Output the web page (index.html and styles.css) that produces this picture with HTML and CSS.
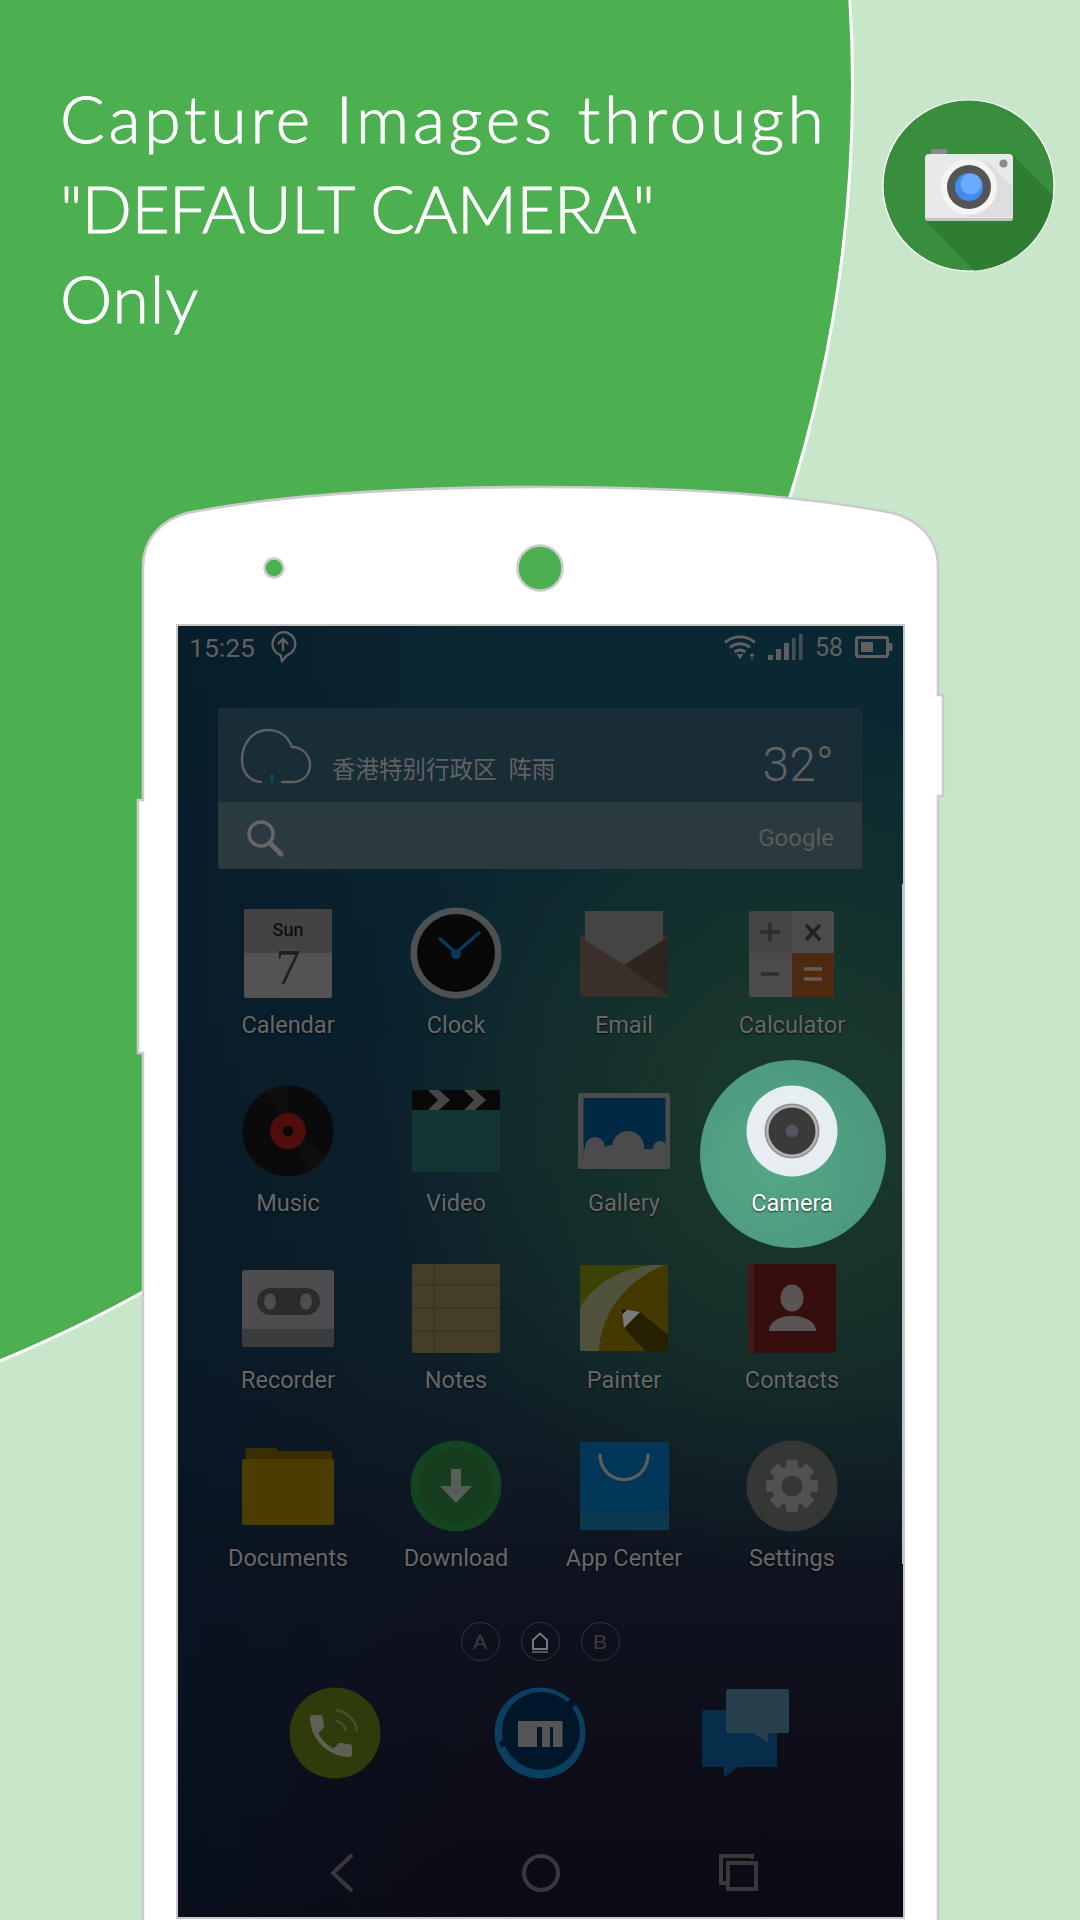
FILE: index.html
```html
<!DOCTYPE html>
<html lang="en">
<head>
<meta charset="utf-8">
<title>Capture Images through Default Camera</title>
<link rel="stylesheet" href="styles.css">
</head>
<body>
<main class="page">
  <div class="blob"></div>
  <header class="hero">
    <h1 class="headline">
      <span class="line line-a">Capture Images through</span>
      <span class="line line-b">"DEFAULT CAMERA"</span>
      <span class="line line-c">Only</span>
    </h1>
    <svg class="logo" viewBox="0 0 173 173" width="173" height="173">
      <circle cx="86.5" cy="86.5" r="85.5" fill="#388e3c" stroke="#fff" stroke-width="1.2"/>
      <path d="M43 121 L130 55 L171 97 A85.5 85.5 0 0 1 92 171.8 Z" fill="#2e7d32"/>
      <rect x="49" y="50" width="16" height="8" rx="1.5" fill="#8a8a8a"/>
      <rect x="43" y="55" width="88" height="67" rx="4" fill="#e9e9e9"/>
      <path d="M43 119.500 v-.5 h88 v.5 a3 3 0 0 1 -3 2.500 h-82 a3 3 0 0 1 -3 -2.500z" fill="#c4c4c4"/>
      <path d="M105 62 L131 88 V118 H85 L70 106z" fill="#dedede"/>
      <circle cx="87" cy="88" r="28" fill="#f4f4f4"/>
      <circle cx="87" cy="88" r="22" fill="#555"/>
      <circle cx="87" cy="88" r="14" fill="#3f8cf3"/>
      <circle cx="89" cy="85" r="10.5" fill="#6aaaff"/>
      <circle cx="121.500" cy="64.500" r="4" fill="#8a8a8a"/>
    </svg>
  </header>

  <section class="phone">
    <svg class="frame" viewBox="135 480 811 1440" width="811" height="1440">
      <path d="M143 1930 V1053 H138 V800 H143 V567 C143 538 162 520 187 513 C290 493 420 487 540 487 C660 487 790 493 893 513 C918 520 938 538 938 567 V695 H943 V796 H938 V1930 Z" fill="#fff" stroke="#cbcbcb" stroke-width="2.600"/>
      <circle cx="274" cy="568" r="9.500" fill="#4caf50" stroke="#cbcbcb" stroke-width="2.500"/>
      <circle cx="540" cy="568" r="22.500" fill="#4caf50" stroke="#cbcbcb" stroke-width="2.500"/>
    </svg>

    <div class="screen">
      <div class="edge"></div>
      <div class="status">
        <span class="clock-text">15:25</span>
        <svg class="st-up" viewBox="0 0 28 34" width="28" height="34">
          <path d="M14 2a12 12 0 0 1 4 23.400L13 31l-1.500 -5.800A12 12 0 0 1 14 2z" fill="none" stroke="#606060" stroke-width="2.400"/>
          <path d="M14 21V9M9 14l5 -5 5 5" fill="none" stroke="#606060" stroke-width="2.400"/>
        </svg>
        <span class="status-gap"></span>
        <svg class="st-wifi" viewBox="0 0 34 26" width="34" height="26">
          <path d="M2 8.500C11 1 23 1 32 8.500M7 13.500C13 8.500 21 8.500 27 13.500M11.500 18C15 15.500 19 15.500 22.500 18" fill="none" stroke="#606060" stroke-width="2.800"/>
          <path d="M13.500 20h7L17 25.500z" fill="#606060"/>
          <path d="M29 25.500v-5M27 22l2 -2 2 2" fill="none" stroke="#606060" stroke-width="1.300"/>
        </svg>
        <svg class="st-signal" viewBox="0 0 36 26" width="36" height="26">
          <rect x="0" y="21" width="5" height="5" fill="#606060"/>
          <rect x="8" y="15" width="5" height="11" fill="#606060"/>
          <rect x="16" y="9" width="5" height="17" fill="#606060"/>
          <rect x="24" y="4" width="3.500" height="22" fill="#465054"/>
          <rect x="31" y="0" width="3.500" height="26" fill="#465054"/>
        </svg>
        <span class="st-num">58</span>
        <svg class="st-batt" viewBox="0 0 38 22" width="38" height="22">
          <rect x="1.500" y="1.500" width="31" height="19" rx="2" fill="none" stroke="#606060" stroke-width="3"/>
          <rect x="6" y="6" width="12" height="10" fill="#606060"/>
          <path d="M34 7h1.500a2 2 0 0 1 2 2v4a2 2 0 0 1 -2 2H34z" fill="#606060"/>
        </svg>
      </div>

      <div class="widget">
        <div class="weather">
          <svg class="cloud" viewBox="0 0 72 56" width="72" height="56">
            <path d="M21 54C9 53 2 44 2 32 2 15 13 2 28 2c11 0 20 6 24 17 10 0 18 8 18 18 0 10 -7 17 -18 17H42" fill="none" stroke="#5f6161" stroke-width="2.400" stroke-linecap="round"/>
            <path d="M32 46v8" stroke="#0f4d70" stroke-width="2.400"/>
          </svg>
          <span class="place">香港特别行政区&nbsp;&nbsp;阵雨</span>
          <span class="temp">32°</span>
        </div>
        <div class="search">
          <svg class="lens" viewBox="0 0 38 38" width="38" height="38">
            <circle cx="15" cy="15" r="12" fill="none" stroke="#666" stroke-width="3.500"/>
            <path d="M24 24l11 11" stroke="#666" stroke-width="5" stroke-linecap="round"/>
          </svg>
          <span class="google">Google</span>
        </div>
      </div>

      <div class="apps">
        <div class="app">
          <svg class="icon" viewBox="0 0 92 92" width="92" height="92">
            <rect x="2" y="2" width="88" height="89" rx="2.500" fill="#707070"/>
            <path d="M2 46V4.500A2.500 2.500 0 0 1 4.500 2h83A2.500 2.500 0 0 1 90 4.500V46z" fill="#5b5b5b"/>
            <text class="ic-sun" x="46" y="29" text-anchor="middle">Sun</text>
            <text class="ic-seven" x="46" y="77" text-anchor="middle">7</text>
          </svg>
          <span class="label">Calendar</span>
        </div>
        <div class="app">
          <svg class="icon" viewBox="0 0 92 92" width="92" height="92">
            <circle cx="46" cy="46" r="45.500" fill="#6a6e70"/>
            <circle cx="46" cy="46" r="39" fill="#0b0b0b"/>
            <path d="M29 31L46 46 70 25" fill="none" stroke="#0c4f7c" stroke-width="3.200" stroke-linejoin="round"/>
            <circle cx="46" cy="47" r="5" fill="#0c4f7c"/>
          </svg>
          <span class="label">Clock</span>
        </div>
        <div class="app">
          <svg class="icon" viewBox="0 0 92 92" width="92" height="92">
            <path d="M2 32L46 58 90 32V87a3 3 0 0 1 -3 3H5a3 3 0 0 1 -3 -3z" fill="#4e4137"/>
            <path d="M7 26L2 31V40L46 66 90 40V31L85 26z" fill="#4e4137"/>
            <path d="M46 58L90 30V88z" fill="#3e3229"/>
            <path d="M7 4H85V33L46 58 7 33z" fill="#5c5c5c"/>
          </svg>
          <span class="label">Email</span>
        </div>
        <div class="app">
          <svg class="icon" viewBox="0 0 92 92" width="92" height="92">
            <rect x="3" y="4" width="85" height="86" rx="2.500" fill="#666"/>
            <path d="M3 46V6.500A2.500 2.500 0 0 1 5.500 4H46V46z" fill="#5d5d5d"/>
            <path d="M46 46H88V87.500A2.500 2.500 0 0 1 85.500 90H46z" fill="#6b3815"/>
            <path d="M24 15V35M14 25H34M15 67H33" stroke="#3e3e3e" stroke-width="3.500" fill="none"/>
            <path d="M60 18L74 33M74 18L60 33" stroke="#2e2e2e" stroke-width="3.500" fill="none"/>
            <path d="M58 62H76M58 72H76" stroke="#8a7c70" stroke-width="3.500" fill="none"/>
          </svg>
          <span class="label">Calculator</span>
        </div>

        <div class="app">
          <svg class="icon" viewBox="0 0 92 92" width="92" height="92">
            <circle cx="46" cy="46" r="45.500" fill="#0e0e0e"/>
            <path d="M46 46L24 6A45.500 45.500 0 0 1 46 .5z" fill="#131313"/>
            <path d="M46 46L68 86A45.500 45.500 0 0 0 84 70z" fill="#131313"/>
            <circle cx="46" cy="46" r="18" fill="#6b1212"/>
            <circle cx="46" cy="46" r="5" fill="#0b0b0b"/>
          </svg>
          <span class="label">Music</span>
        </div>
        <div class="app">
          <svg class="icon" viewBox="0 0 92 92" width="92" height="92">
            <path d="M2 25H90V85a2 2 0 0 1 -2 2H4a2 2 0 0 1 -2 -2z" fill="#184644"/>
            <rect x="2" y="5" width="88" height="20" fill="#0c0c0c"/>
            <path d="M18 5H29L40 15 29 25H18L28 15zM54 5H65L76 15 65 25H54L64 15z" fill="#5f5f5f"/>
          </svg>
          <span class="label">Video</span>
        </div>
        <div class="app">
          <svg class="icon" viewBox="0 0 92 92" width="92" height="92">
            <rect x="0" y="8" width="92" height="76" rx="2.500" fill="#656668"/>
            <rect x="5.500" y="13" width="82" height="58" fill="#02375a"/>
            <circle cx="50" cy="62" r="16" fill="#656668"/>
            <circle cx="17" cy="62" r="10" fill="#656668"/>
            <circle cx="32" cy="66" r="6" fill="#656668"/>
            <circle cx="82" cy="63" r="7" fill="#656668"/>
            <rect x="5.500" y="64" width="82" height="10" fill="#656668"/>
          </svg>
          <span class="label">Gallery</span>
        </div>
        <div class="app app-active">
          <svg class="icon" viewBox="0 0 92 92" width="92" height="92">
            <circle cx="46" cy="46" r="45.500" fill="#e6eef2"/>
            <circle cx="46" cy="46" r="27.500" fill="#8f8f8f"/>
            <circle cx="46" cy="46" r="26" fill="#b0b3b4"/>
            <circle cx="46" cy="46" r="23.500" fill="#3a3a3a"/>
            <circle cx="46" cy="46" r="6.500" fill="#55555e"/>
          </svg>
          <span class="label">Camera</span>
        </div>

        <div class="app">
          <svg class="icon" viewBox="0 0 92 92" width="92" height="92">
            <rect x="0" y="8" width="92" height="77" rx="2.500" fill="#686868"/>
            <path d="M0 67H92V82.500A2.500 2.500 0 0 1 89.500 85H2.500A2.500 2.500 0 0 1 0 82.500z" fill="#4f5153"/>
            <rect x="15" y="26" width="63" height="27" rx="13.500" fill="#3a3a3a"/>
            <ellipse cx="28" cy="39.500" rx="6" ry="8" fill="#6a6a6a"/>
            <ellipse cx="64" cy="39.500" rx="6" ry="8" fill="#6a6a6a"/>
          </svg>
          <span class="label">Recorder</span>
        </div>
        <div class="app">
          <svg class="icon" viewBox="0 0 92 92" width="92" height="92">
            <rect x="2" y="2" width="88" height="89" rx="2" fill="#5e5233"/>
            <path d="M2 23H90M2 46H90M2 69H90M24 2V91" stroke="#524528" stroke-width="1.500" fill="none"/>
          </svg>
          <span class="label">Notes</span>
        </div>
        <div class="app">
          <svg class="icon" viewBox="0 0 92 92" width="92" height="92">
            <rect x="2" y="3" width="88" height="86" rx="2" fill="#4e5a05"/>
            <path d="M2 46C14 24 40 7 73 3H88a2 2 0 0 1 2 2V87a2 2 0 0 1 -2 2H4a2 2 0 0 1 -2 -2z" fill="#6c6f50"/>
            <path d="M21 89C22 54 46 20 84 4L88 3a2 2 0 0 1 2 2V87a2 2 0 0 1 -2 2z" fill="#5c4d00"/>
            <path d="M62 50L90 73V87a2 2 0 0 1 -2 2H67.500L46 66z" fill="#332a00"/>
            <path d="M44 47L62 50 46 66z" fill="#a3a3a3"/>
            <path d="M44 47L49 48 44.500 52z" fill="#111"/>
          </svg>
          <span class="label">Painter</span>
        </div>
        <div class="app">
          <svg class="icon" viewBox="0 0 92 92" width="92" height="92">
            <rect x="2" y="2" width="88" height="89" rx="2" fill="#4a1313"/>
            <path d="M2 4a2 2 0 0 1 2 -2H8V91H4a2 2 0 0 1 -2 -2z" fill="#5c2222"/>
            <ellipse cx="46" cy="36" rx="11.500" ry="13.500" fill="#7a7272"/>
            <path d="M23 69C23 60 33 54 46 54S70 60 70 69z" fill="#7a7272"/>
          </svg>
          <span class="label">Contacts</span>
        </div>

        <div class="app">
          <svg class="icon" viewBox="0 0 92 92" width="92" height="92">
            <path d="M3.500 22V10a2 2 0 0 1 2 -2H34l3 3H88a2 2 0 0 1 2 2V22z" fill="#4f3e00"/>
            <path d="M0 21a2 2 0 0 1 2 -2H90a2 2 0 0 1 2 2V83a2 2 0 0 1 -2 2H2a2 2 0 0 1 -2 -2z" fill="#665200"/>
          </svg>
          <span class="label">Documents</span>
        </div>
        <div class="app">
          <svg class="icon" viewBox="0 0 92 92" width="92" height="92">
            <circle cx="46" cy="46" r="45.500" fill="#1a5a2a"/>
            <circle cx="46" cy="46" r="37" fill="#1e5229"/>
            <path d="M41 29H51V46H62L46 63 30 46H41z" fill="#7a7f7a"/>
          </svg>
          <span class="label">Download</span>
        </div>
        <div class="app">
          <svg class="icon" viewBox="0 0 92 92" width="92" height="92">
            <rect x="2" y="2" width="89" height="88" fill="#034a78"/>
            <rect x="2" y="71" width="89" height="19" fill="#0f4d6c"/>
            <path d="M22 14C22 48 70 48 70 14" fill="none" stroke="#808080" stroke-width="3.200"/>
          </svg>
          <span class="label">App Center</span>
        </div>
        <div class="app">
          <svg class="icon" viewBox="0 0 92 92" width="92" height="92">
            <circle cx="46" cy="46" r="45.500" fill="#484949"/>
            <g fill="#6e6e6e">
              <rect x="40" y="20" width="12" height="52" rx="2"/>
              <rect x="40" y="20" width="12" height="52" rx="2" transform="rotate(45 46 46)"/>
              <rect x="40" y="20" width="12" height="52" rx="2" transform="rotate(90 46 46)"/>
              <rect x="40" y="20" width="12" height="52" rx="2" transform="rotate(135 46 46)"/>
              <circle cx="46" cy="46" r="20"/>
            </g>
            <circle cx="46" cy="46" r="10.500" fill="#484949"/>
          </svg>
          <span class="label">Settings</span>
        </div>
      </div>

      <div class="pager">
        <span class="dot">A</span>
        <span class="dot">
          <svg viewBox="0 0 20 22" width="20" height="22">
            <path d="M3 18V9L10 2.500 17 9V18z" fill="none" stroke="#777" stroke-width="2"/>
            <path d="M2 21H18" stroke="#555" stroke-width="2"/>
          </svg>
        </span>
        <span class="dot">B</span>
      </div>

      <div class="dock">
        <svg viewBox="0 0 92 92" width="92" height="92">
          <circle cx="46" cy="46" r="45.500" fill="#3b4a0d"/>
          <path d="M6.620 10.790c1.440 2.830 3.760 5.140 6.590 6.590l2.200-2.200c.27-.27.67-.36 1.020-.24 1.120.37 2.330.57 3.570.57.55 0 1 .45 1 1V20c0 .55-.45 1-1 1-9.390 0-17-7.610-17-17 0-.55.45-1 1-1h3.500c.55 0 1 .45 1 1 0 1.250.2 2.450.57 3.570.11.350.03.74-.25 1.020l-2.200 2.200z" transform="translate(14 21) scale(2.330)" fill="#75786a"/>
          <path d="M47 34C52 35 56 39 57 44M47 23C57 24 67 33 68 44" fill="none" stroke="#56613a" stroke-width="2.800"/>
        </svg>
        <svg viewBox="0 0 92 92" width="92" height="92">
          <circle cx="46" cy="46" r="45.500" fill="#0c4f78"/>
          <circle cx="47" cy="44" r="39" fill="#021c33"/>
          <path d="M72 16l5 -4 5 6 -4 3zM5 55l5 -3 2 6 -5 3z" fill="#021c33"/>
          <path d="M24 34H68.500V60H24z" fill="#6a6a6a"/>
          <path d="M43 40H48V60H43zM56 40H59V60H56z" fill="#021c33"/>
        </svg>
        <svg viewBox="0 0 92 92" width="92" height="92">
          <path d="M5 23H76a2 2 0 0 1 2 2V78a2 2 0 0 1 -2 2H39L25 90V80H5a2 2 0 0 1 -2 -2V25a2 2 0 0 1 2 -2z" fill="#073a5e"/>
          <path d="M29 2H88a2 2 0 0 1 2 2V44a2 2 0 0 1 -2 2H69V56L54 46H29a2 2 0 0 1 -2 -2V4a2 2 0 0 1 2 -2z" fill="#31505f"/>
        </svg>
      </div>

      <nav class="nav">
        <svg viewBox="0 0 40 40" width="40" height="40">
          <path d="M29 3L11 20 29 37" fill="none" stroke="#4b4b4f" stroke-width="4" stroke-linecap="round" stroke-linejoin="round"/>
        </svg>
        <svg viewBox="0 0 40 40" width="40" height="40">
          <circle cx="20" cy="20" r="17" fill="none" stroke="#4b4b4f" stroke-width="4"/>
        </svg>
        <svg viewBox="0 0 40 40" width="40" height="40">
          <path d="M33 6V3H2V30H9" fill="none" stroke="#4b4b4f" stroke-width="4"/>
          <rect x="9" y="10" width="28" height="26" fill="none" stroke="#4b4b4f" stroke-width="4"/>
        </svg>
      </nav>
    </div>
  </section>
</main>
</body>
</html>
```
FILE: styles.css
```css
* { box-sizing: border-box; }
html, body { margin: 0; padding: 0; }
body { width: 1080px; height: 1920px; overflow: hidden; }
svg { display: block; flex: none; }

.page {
  position: relative;
  width: 1080px;
  height: 1920px;
  overflow: hidden;
  background: #c8e6c9;
  font-family: Roboto, "Noto Sans CJK SC", sans-serif;
}

.blob {
  position: absolute;
  left: -1908px;
  top: -1295px;
  width: 2762px;
  height: 2762px;
  border-radius: 50%;
  background: #4caf50;
  border: 3px solid #fff;
}

.hero {
  position: relative;
  display: flex;
  justify-content: space-between;
  align-items: flex-start;
  height: 487px;
  padding: 73px 25px 0 60px;
}
.headline {
  margin: 0;
  font-family: Lato, sans-serif;
  font-weight: 300;
  font-size: 66px;
  line-height: 90px;
  color: #fff;
  -webkit-text-stroke: .9px #fff;
}
.line { display: block; white-space: nowrap; }
.line-a { letter-spacing: 3.800px; }
.line-b { letter-spacing: -.6px; }
.line-c { letter-spacing: 1px; }
.logo { margin-top: 26px; }

.phone {
  position: relative;
  width: 796px;
  height: 1433px;
  margin-left: 142px;
  padding: 137px 30px 0 34px;
}
.frame { position: absolute; left: -7px; top: -7px; }

.screen {
  position: relative;
  width: 729px;
  height: 1295px;
  border: 2px solid #c8c8c8;
  background:
    linear-gradient(90deg, rgba(6, 20, 36, .55) 0%, rgba(6, 20, 36, 0) 45%),
    radial-gradient(ellipse 420px 440px at 86% 39%, #1c3c2a 0%, rgba(28, 60, 42, 0) 100%),
    linear-gradient(180deg, #0a2833 0%, #0b2530 28%, #0f2029 56%, #0e111d 78%, #0c0a14 100%);
}
.edge {
  position: absolute;
  right: -1px;
  top: 258px;
  width: 2px;
  height: 680px;
  background: #bccbbf;
}

.status {
  display: flex;
  align-items: center;
  height: 42px;
  padding: 0 10px 0 11px;
  margin-bottom: 40px;
  color: #606060;
}
.clock-text { font-size: 26.500px; font-weight: 400; margin-right: 14px; }
.status-gap { flex: 1; }
.st-wifi { margin-right: 11px; }
.st-signal { margin-right: 11px; }
.st-num { font-size: 25px; font-weight: 400; margin-right: 12px; }

.widget {
  width: 644px;
  margin-left: 40px;
  border-radius: 3px;
  overflow: hidden;
}
.weather {
  display: flex;
  align-items: flex-start;
  height: 94px;
  padding: 20px 28px 0 22px;
  background: #182d36;
  color: #626262;
}
.place { font-size: 23.500px; line-height: 30px; margin: 27px 0 0 20px; }
.temp { font-size: 48px; font-weight: 300; line-height: 58px; margin: 8px 0 0 auto; }
.search {
  display: flex;
  align-items: center;
  justify-content: space-between;
  height: 67px;
  padding: 4px 28px 0 28px;
  background: #2b3a3f;
}
.google { font-size: 24px; color: #5a5b5b; }

.apps {
  display: grid;
  grid-template-columns: repeat(4, 168px);
  grid-auto-rows: 177.5px;
  margin: 38px 0 0 26px;
}
.app {
  position: relative;
  display: flex;
  flex-direction: column;
  align-items: center;
  gap: 12px;
}
.app-active::before {
  content: "";
  position: absolute;
  left: -8px;
  top: -25px;
  width: 186px;
  height: 188px;
  border-radius: 50%;
  background: radial-gradient(circle at 40% 55%, #56a885 0%, #4c9980 70%, #4a917b 100%);
}
.icon { position: relative; }
.app:not(.app-active) .icon, .nav svg { filter: brightness(.74); }
.dock svg { filter: brightness(.8); }
.label {
  position: relative;
  font-size: 23.500px;
  line-height: 28px;
  color: #686868;
  text-shadow: 0 1px 2px rgba(0, 0, 0, .7);
  white-space: nowrap;
}
.app-active .label { color: #fff; }
.ic-sun { font-family: Roboto, sans-serif; font-size: 18px; font-weight: 500; fill: #141414; }
.ic-seven { font-family: "Liberation Serif", serif; font-size: 50px; fill: #2b2b2b; }

.pager {
  display: flex;
  justify-content: center;
  gap: 21px;
  margin: 5px 0 0 -1px;
}
.dot {
  display: flex;
  align-items: center;
  justify-content: center;
  width: 39px;
  height: 39px;
  border: 1.500px solid #333337;
  border-radius: 50%;
  font-family: "Liberation Sans", sans-serif;
  font-size: 21px;
  color: #3c3c3e;
}

.dock {
  display: grid;
  grid-template-columns: repeat(3, 205px);
  justify-items: center;
  margin: 26px 0 0 54px;
}
.nav {
  display: grid;
  grid-template-columns: repeat(3, 198.500px);
  justify-items: center;
  margin: 74px 0 0 65px;
}
```
